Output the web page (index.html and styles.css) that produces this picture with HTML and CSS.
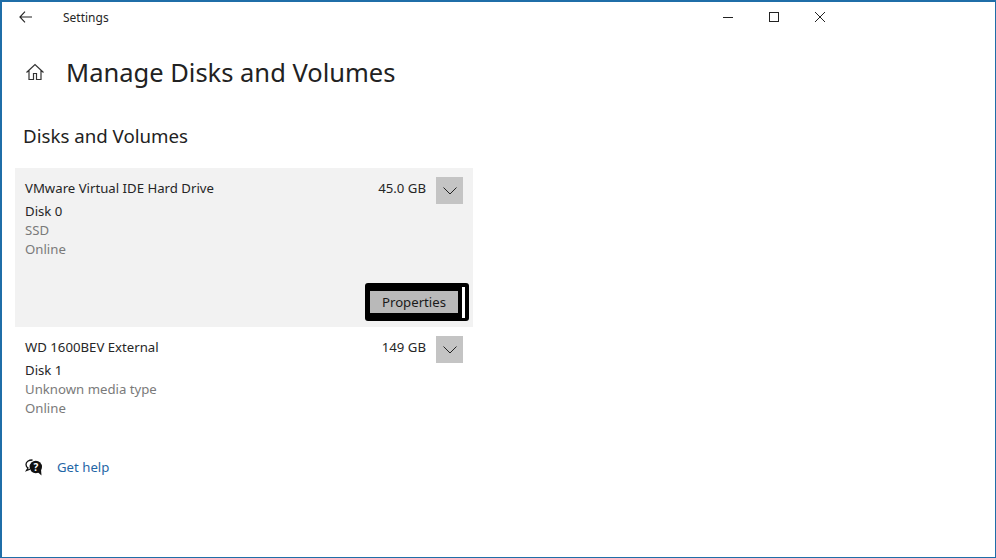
FILE: index.html
```html
<!DOCTYPE html>
<html lang="en">
<head>
<meta charset="utf-8">
<title>Settings</title>
<link rel="stylesheet" href="styles.css">
</head>
<body>
<div class="window">
  <header class="titlebar">
    <svg class="back" width="13" height="12" viewBox="0 0 13 12"><path d="M6 .7.9 6l5.100 5.300M.9 6H13" fill="none" stroke="#222" stroke-width="1.100"/></svg>
    <span class="app-title">Settings</span>
    <div class="controls">
      <svg width="12" height="12" viewBox="0 0 12 12"><path d="M1 6.500h10" stroke="#222" stroke-width="1"/></svg>
      <svg width="12" height="12" viewBox="0 0 12 12"><rect x="1.500" y="1.500" width="9" height="9" fill="none" stroke="#222" stroke-width="1"/></svg>
      <svg width="12" height="12" viewBox="0 0 12 12"><path d="M1 1l10 10M11 1 1 11" stroke="#222" stroke-width="1"/></svg>
    </div>
  </header>
  <div class="heading">
    <svg class="home" width="20" height="20" viewBox="0 0 20 20"><path d="M1.500 10.500 10 2.500l8.500 8M4 8.500V17.500h4.500V11.500h3V17.500H16V8.500" fill="none" stroke="#333" stroke-width="1.200"/></svg>
    <h1>Manage Disks and Volumes</h1>
  </div>
  <h2>Disks and Volumes</h2>
  <section class="disk selected">
    <div class="disk-top">
      <div class="disk-info">
        <div class="disk-name">VMware Virtual IDE Hard Drive</div>
        <div class="disk-id">Disk 0</div>
        <div class="muted">SSD</div>
        <div class="muted">Online</div>
      </div>
      <div class="size">45.0 GB</div>
      <div class="chevron"><svg width="14" height="8" viewBox="0 0 14 8"><path d="M.5.5 7 7 13.500.5" fill="none" stroke="#222" stroke-width="1"/></svg></div>
    </div>
    <div class="actions">
      <div class="focus">
        <button class="props">Properties</button>
        <span class="focus-bar"></span>
      </div>
    </div>
  </section>
  <section class="disk">
    <div class="disk-top">
      <div class="disk-info">
        <div class="disk-name">WD 1600BEV External</div>
        <div class="disk-id">Disk 1</div>
        <div class="muted">Unknown media type</div>
        <div class="muted">Online</div>
      </div>
      <div class="size">149 GB</div>
      <div class="chevron"><svg width="14" height="8" viewBox="0 0 14 8"><path d="M.5.5 7 7 13.500.5" fill="none" stroke="#222" stroke-width="1"/></svg></div>
    </div>
  </section>
  <div class="help">
    <svg width="18" height="17" viewBox="0 0 18 17"><path d="M7.500 1C3.500 1 1 3 1 5.500c0 1.500.8 2.700 2 3.500L1.500 11.500 5 10.200" fill="none" stroke="#111" stroke-width="1.300"/><circle cx="10.800" cy="8" r="6.200" fill="#111"/><path d="M12 12.500l4.500 4-.5-6z" fill="#111"/><text x="10.800" y="11.500" class="q">?</text></svg>
    <a class="help-link">Get help</a>
  </div>
</div>
</body>
</html>
```
FILE: styles.css
```css
html, body {
  margin: 0;
  padding: 0;
  background: #fff;
}
.window {
  box-sizing: border-box;
  width: 996px;
  height: 558px;
  border: 2px solid #1f6ea8;
  border-width: 2px 1px 1px 2px;
  font-family: "Noto Sans", "Open Sans", sans-serif;
  color: #262626;
  font-size: 13.2px;
  overflow: hidden;
}
.titlebar {
  display: flex;
  align-items: center;
  height: 30px;
  padding-left: 17px;
}
.back { margin-right: 31px; }
.app-title { font-size: 12px; }
.controls {
  display: flex;
  gap: 34px;
  margin-left: 613px;
}
.heading {
  display: flex;
  align-items: center;
  margin-top: 19px;
  height: 42px;
  padding-left: 23px;
}
.home { margin-right: 21px; }
h1 {
  margin: 0;
  font-size: 25.500px;
  font-weight: 400;
  color: #222;
}
h2 {
  margin: 29px 0 0 21px;
  font-size: 18.700px;
  line-height: 28px;
  font-weight: 400;
  color: #222;
}
.disk {
  width: 458px;
  margin-left: 13px;
  box-sizing: border-box;
  padding: 9px 10px 0;
}
.disk.selected {
  margin-top: 18px;
  height: 159px;
  background: #f2f2f2;
}
.disk-top { display: flex; align-items: flex-start; }
.disk-info { flex: 1; }
.disk-name { margin-top: 1px; line-height: 20px; height: 24px; }
.disk-id, .muted { line-height: 19px; }
.muted { color: #7a7a7a; }
.size { margin-top: 1px; line-height: 20px; margin-right: 10px; }
.chevron {
  width: 27px;
  height: 27px;
  background: #c4c4c4;
  display: flex;
  align-items: center;
  justify-content: center;
}
.actions {
  display: flex;
  justify-content: flex-end;
  margin-top: 24px;
  margin-right: -6px;
}
.focus {
  box-sizing: border-box;
  width: 104px;
  height: 38px;
  background: #000;
  border-radius: 3px;
  display: flex;
  align-items: center;
  padding-left: 5px;
}
.props {
  width: 88px;
  height: 22px;
  padding: 0;
  border: 0;
  background: #b9b9b9;
  font: inherit;
  color: #1a1a1a;
}
.focus-bar {
  width: 3px;
  height: 31px;
  margin-left: 4px;
  background: #fff;
}
.help {
  display: flex;
  align-items: center;
  margin: 39px 0 0 23px;
  height: 20px;
}
.help svg { margin-right: 14px; }
.help-link { color: #1f66a6; }
.q {
  fill: #fff;
  font-size: 10px;
  font-weight: 700;
  text-anchor: middle;
  font-family: "Noto Sans", sans-serif;
}
```
